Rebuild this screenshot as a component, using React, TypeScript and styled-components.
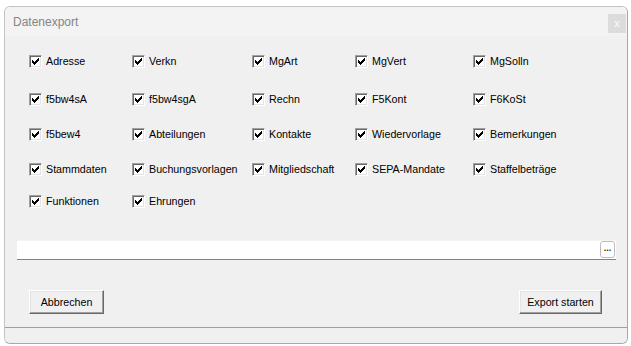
import React from "react";
import styled, { createGlobalStyle } from "styled-components";

const GlobalStyle = createGlobalStyle`
  html, body { margin: 0; padding: 0; background: #ffffff; }
  body { font-family: "Liberation Sans", Arial, sans-serif; }
  * { box-sizing: border-box; }
`;

const Page = styled.div`
  width: 631px;
  height: 346px;
  padding: 6px 3px 2px 4px;
  background: #ffffff;
`;

const Window = styled.div`
  width: 624px;
  height: 338px;
  border: 1px solid #c4c4c4;
  border-right-color: #a8a8a8;
  border-bottom-color: #a8a8a8;
  border-radius: 6px;
  background: #f0f0f0;
  display: flex;
  flex-direction: column;
  overflow: hidden;
`;

const TitleBar = styled.div`
  height: 29px;
  flex: 0 0 29px;
  background: #f3f3f3;
  display: flex;
  align-items: center;
  justify-content: space-between;
  padding-left: 8px;
  padding-right: 1px;
`;

const Title = styled.span`
  font-family: "Liberation Sans", Arial, sans-serif;
  font-size: 12px;
  color: #858585;
`;

const CloseButton = styled.div`
  width: 18px;
  height: 19px;
  margin-top: 4px;
  background: #dcdcdc;
  color: #f4f4f4;
  font-size: 10px;
  font-weight: bold;
  display: flex;
  align-items: center;
  justify-content: center;
  font-family: "Liberation Sans", Arial, sans-serif;
`;

const Body = styled.div`
  flex: 1;
  display: flex;
  flex-direction: column;
  padding-top: 18.5px;
`;

const Grid = styled.div`
  display: grid;
  grid-template-columns: 103px 120px 103px 118px 120px;
  grid-template-rows: 38.5px 34.5px 35px 32px 13px;
  padding-left: 24px;
  height: 153px;
`;

const Item = styled.label`
  display: flex;
  align-items: flex-start;
  height: 13px;
  gap: 4px;
  font-family: "Liberation Sans", Arial, sans-serif;
  font-size: 10.7px;
  color: #000000;
  white-space: nowrap;
`;

const Box = styled.span`
  position: relative;
  width: 13px;
  height: 13px;
  flex: 0 0 13px;
  background: #ffffff;
  border-top: 1px solid #a0a0a0;
  border-left: 1px solid #a0a0a0;
  border-bottom: 1px solid #ffffff;
  border-right: 1px solid #ffffff;
  box-shadow: inset 1px 1px 0 #696969, inset -1px -1px 0 #e3e3e3;
  display: block;
`;

const CheckSvg = styled.svg`
  position: absolute;
  left: -1px;
  top: -1px;
`;

const LabelText = styled.span`
  line-height: 13px;
`;

const Check = () => (
  <CheckSvg width="13" height="13" viewBox="0 0 13 13" shapeRendering="crispEdges">
    <rect x="3" y="5" width="1" height="3" fill="#000" />
    <rect x="4" y="6" width="1" height="3" fill="#000" />
    <rect x="5" y="7" width="1" height="3" fill="#000" />
    <rect x="6" y="6" width="1" height="3" fill="#000" />
    <rect x="7" y="5" width="1" height="3" fill="#000" />
    <rect x="8" y="4" width="1" height="3" fill="#000" />
    <rect x="9" y="3" width="1" height="3" fill="#000" />
  </CheckSvg>
);

const PathField = styled.div`
  margin: 32.5px 11px 0 12px;
  height: 20px;
  background: #ffffff;
  border-top: 1px solid #f4f4f4;
  border-bottom: 1px solid #828282;
  display: flex;
  justify-content: flex-end;
  align-items: flex-start;
  padding-right: 1px;
`;

const BrowseButton = styled.div`
  width: 15px;
  height: 17px;
  border: 1px solid #bdbdbd;
  border-radius: 3px;
  background: #ffffff;
  font-size: 9px;
  font-weight: bold;
  line-height: 12px;
  color: #222;
  text-align: center;
  font-family: "Liberation Sans", Arial, sans-serif;
`;

const ButtonRow = styled.div`
  margin-top: 30px;
  padding: 0 25px 0 24px;
  display: flex;
  justify-content: space-between;
`;

const Button = styled.div<{ $w: number }>`
  width: ${(p) => p.$w}px;
  height: 24px;
  background: #f0f0f0;
  border-top: 1px solid #ffffff;
  border-left: 1px solid #ffffff;
  border-right: 1px solid #696969;
  border-bottom: 1px solid #696969;
  box-shadow: inset -1px -1px 0 #a0a0a0, inset 1px 1px 0 #e3e3e3;
  display: flex;
  align-items: center;
  justify-content: center;
  font-family: "Liberation Sans", Arial, sans-serif;
  font-size: 10.7px;
  color: #000;
  padding-bottom: 1px;
`;

const StatusBar = styled.div`
  height: 16px;
  flex: 0 0 16px;
  border-top: 1px solid #a0a0a0;
  background: #f0f0f0;
`;

const rows: string[][] = [
  ["Adresse", "Verkn", "MgArt", "MgVert", "MgSolln"],
  ["f5bw4sA", "f5bw4sgA", "Rechn", "F5Kont", "F6KoSt"],
  ["f5bew4", "Abteilungen", "Kontakte", "Wiedervorlage", "Bemerkungen"],
  ["Stammdaten", "Buchungsvorlagen", "Mitgliedschaft", "SEPA-Mandate", "Staffelbeträge"],
  ["Funktionen", "Ehrungen"],
];

export default function App() {
  return (
    <>
      <GlobalStyle />
      <Page>
        <Window>
          <TitleBar>
            <Title>Datenexport</Title>
            <CloseButton>x</CloseButton>
          </TitleBar>
          <Body>
            <Grid>
              {rows.map((row, r) =>
                row.map((name, c) => (
                  <Item key={`${r}-${c}`} style={{ gridRow: r + 1, gridColumn: c + 1 }}>
                    <Box>
                      <Check />
                    </Box>
                    <LabelText>{name}</LabelText>
                  </Item>
                ))
              )}
            </Grid>
            <PathField>
              <BrowseButton>...</BrowseButton>
            </PathField>
            <ButtonRow>
              <Button $w={75}>Abbrechen</Button>
              <Button $w={83}>Export starten</Button>
            </ButtonRow>
          </Body>
          <StatusBar />
        </Window>
      </Page>
    </>
  );
}
